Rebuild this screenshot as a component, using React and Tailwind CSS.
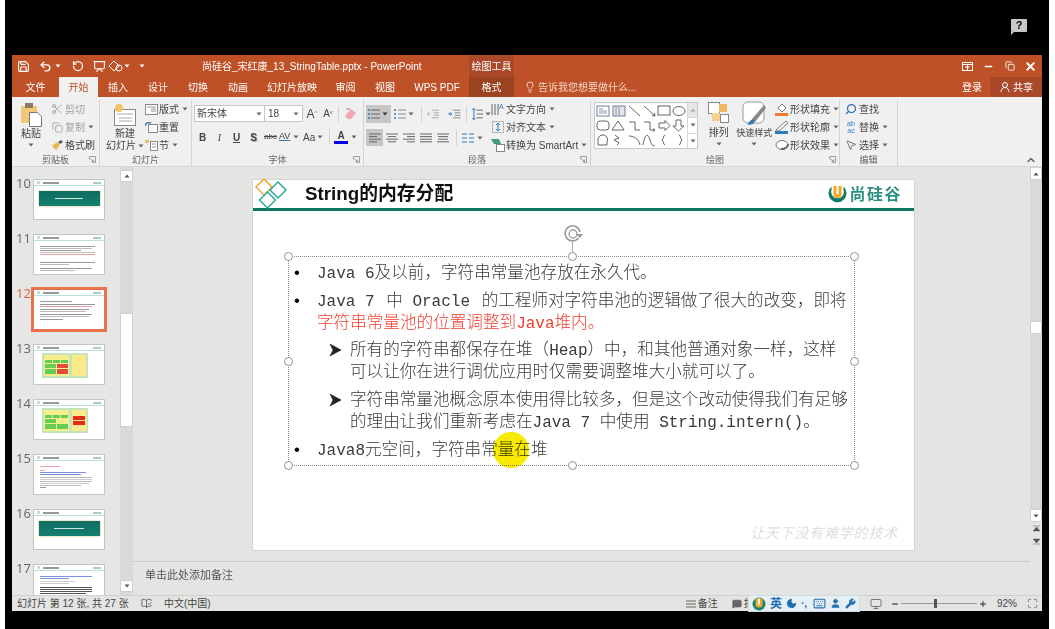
import { Save, Undo2, RotateCcw, Scissors, Copy, Lightbulb, UserRound, Search, X, Minus, Plus, MessageSquare, Moon, Keyboard, User, Wrench, MousePointer2, Presentation, ChevronUp, Maximize, Monitor, BookOpenCheck, Copy as Restore } from "lucide-react";

const fontUi = "[font-family:'Liberation_Sans','Noto_Sans_CJK_SC',sans-serif]";

function Caret({ color = "#666", className = "" }) {
    return (
        <svg width="6" height="4" viewBox="0 0 6 4" className={"inline-block shrink-0 " + className}>
            <path d="M0.5 0.5h5L3 3.5z" fill={color} />
        </svg>
    );
}

function Launcher() {
    return (
        <svg width="7" height="7" viewBox="0 0 7 7" className="absolute right-[3px] bottom-[3px]">
            <path d="M0.5 3V0.5H6.5V6.5H3.5M1 2.5L4.5 5.5M4.5 3.5V5.5H2.5" fill="none" stroke="#888" strokeWidth="0.8" />
        </svg>
    );
}

function Group({ width, label, launcher, children }) {
    return (
        <div style={{ width }} className="relative h-full shrink-0 flex flex-col border-r border-[#d4d4d4]">
            <div className="flex-1 min-h-0 flex">{children}</div>
            <div className="h-[12px] text-center text-[9px] leading-[12px] text-[#666]">{label}</div>
            {launcher && <Launcher />}
        </div>
    );
}

function SmallBtn({ icon, label, caret, gray, className = "" }) {
    return (
        <div className={"h-[18px] flex items-center gap-[1px] whitespace-nowrap text-[10px] " + (gray ? "text-[#a0a0a0] " : "text-[#444] ") + className}>
            <span className="w-[14px] h-[16px] flex items-center justify-center shrink-0">{icon}</span>
            <span>{label}</span>
            {caret && <Caret className="ml-[2px]" />}
        </div>
    );
}

function Lines({ rows, w = 17, active }) {
    // paragraph alignment icons
    return (
        <div className={"h-[17px] flex items-center justify-center " + (active ? "bg-[#c6c6c6] " : "")} style={{ width: w }}>
            <svg width="12" height="10" viewBox="0 0 12 10">
                {rows.map((r, i) => (
                    <line key={i} x1={r[0]} x2={r[1]} y1={1 + i * 2.6} y2={1 + i * 2.6} stroke="#666" strokeWidth="1" />
                ))}
            </svg>
        </div>
    );
}

function ShapesGallery() {
    const s = { fill: "none", stroke: "#666", strokeWidth: 1 };
    return (
        <div className="w-[104px] h-[47px] flex bg-white border border-[#c8c8c8]">
            <svg width="92" height="45" viewBox="0 0 92 45" className="shrink-0">
                <rect x="2" y="3" width="12" height="10" fill="#fff" stroke="#6a7f9c" />
                <path d="M4 6h4M4 8h8M4 10h8" stroke="#6a7f9c" strokeWidth="0.8" />
                <rect x="18" y="3" width="12" height="10" fill="#e6e6e6" stroke="#6a7f9c" />
                <path d="M21 4v8M24 4v8" stroke="#6a7f9c" strokeWidth="0.8" />
                <path d="M34 3l11 10" {...s} />
                <path d="M49 3l11 10M60 13l-3-.5M60 13l-.5-3" {...s} />
                <rect x="63" y="3" width="12" height="9" {...s} />
                <ellipse cx="84" cy="8" rx="6" ry="4.5" {...s} />
                <rect x="2" y="18" width="12" height="9" rx="3" {...s} />
                <path d="M23 18l6 9h-12z" {...s} />
                <path d="M34 19h6v8h5" {...s} />
                <path d="M49 19h6v8h5M60 27l-2-1.5M60 27l-2 1.5" {...s} />
                <path d="M64 20h6v-2.500l5 5-5 5V25h-6z" {...s} />
                <path d="M81 17h5v6h3l-5.500 5-5.500-5h3z" {...s} />
                <path d="M3 42v-7l3-3h3a5 5 0 0 1 3 7v3z" {...s} />
                <path d="M20 32l4 3-5 2 5 3-2 2" {...s} />
                <path d="M34 33c5 0 10 3 11 9" {...s} />
                <path d="M48 42c2-12 5-12 7-5s4 6 5 5" {...s} />
                <path d="M70 32c-2 0-1 4-3 5 2 1 1 5 3 5" {...s} />
                <path d="M84 32c2 0 1 4 3 5-2 1-1 5-3 5" {...s} />
            </svg>
            <div className="flex-1 flex flex-col border-l border-[#d8d8d8]">
                <div className="flex-1 flex items-center justify-center bg-[#e6e6e6]"><Caret color="#aaa" className="rotate-180" /></div>
                <div className="flex-1 flex items-center justify-center border-y border-[#d8d8d8]"><Caret /></div>
                <div className="flex-1 flex items-center justify-center"><Caret /></div>
            </div>
        </div>
    );
}

function Ribbon() {
    return (
        <div className="h-[70px] flex bg-[#f0f0f0] border-b border-[#d6d6d6] pt-[3px] text-[#444]">
            <Group width={88} label="剪贴板" launcher>
                <div className="w-[38px] flex flex-col items-center">
                    <svg width="21" height="24" viewBox="0 0 21 24" className="shrink-0 mt-[3px]">
                        <rect x="0" y="3" width="16" height="17" fill="#f2c878" />
                        <rect x="4" y="0" width="8" height="5" fill="#8a7a68" />
                        <path d="M8.500 9.500h8l4 4v10h-12z" fill="#fff" stroke="#777" />
                    </svg>
                    <div className="text-[10px] leading-[12px] mt-[1px]">粘贴</div>
                    <Caret className="mt-[3px]" />
                </div>
                <div className="flex flex-col">
                    <SmallBtn gray label="剪切" icon={<Scissors size={12} color="#aaa" />} />
                    <SmallBtn gray label="复制" caret icon={<Copy size={11} color="#aaa" />} />
                    <SmallBtn label="格式刷" icon={
                        <svg width="13" height="12" viewBox="0 0 13 12"><path d="M1 7l5-4 3 3-4 5z" fill="#e9b752" /><path d="M7 3l3-2 2 2-3 2z" fill="#555" /></svg>
                    } />
                </div>
            </Group>
            <Group width={92} label="幻灯片">
                <div className="w-[44px] flex flex-col items-center pl-[6px]">
                    <svg width="24" height="24" viewBox="0 0 24 24" className="shrink-0 mt-[3px]">
                        <rect x="1.500" y="6.500" width="21" height="16" fill="#fff" stroke="#888" />
                        <path d="M4 11h16M6 15h13M6 18h13" stroke="#aaa" />
                        <circle cx="6" cy="5" r="4" fill="#f4c260" />
                    </svg>
                    <div className="text-[10px] leading-[12px] mt-[1px]">新建</div>
                    <div className="flex items-center gap-[2px] text-[10px] leading-[12px] whitespace-nowrap">幻灯片<Caret /></div>
                </div>
                <div className="flex flex-col">
                    <SmallBtn label="版式" caret icon={<svg width="13" height="11" viewBox="0 0 13 11"><rect x="0.500" y="0.500" width="12" height="10" fill="#fff" stroke="#888" /><path d="M2 3h9M6 5h5M6 7h5" stroke="#999" /></svg>} />
                    <SmallBtn label="重置" icon={<svg width="13" height="11" viewBox="0 0 13 11"><rect x="3.500" y="2.500" width="9" height="8" fill="#fff" stroke="#888" /><path d="M0 4a4 4 0 0 1 6-3" fill="none" stroke="#2f7ab9" strokeWidth="1.500" /></svg>} />
                    <SmallBtn label="节" caret icon={<svg width="13" height="12" viewBox="0 0 13 12"><rect x="0" y="1" width="4" height="3" fill="#f0b860" /><rect x="5.500" y="2.500" width="7" height="9" fill="#fff" stroke="#888" /><path d="M7 5h4M7 8h4" stroke="#999" /></svg>} />
                </div>
            </Group>
            <Group width={172} label="字体" launcher>
                <div className="flex flex-col pl-[2px]">
                    <div className="flex items-center h-[17px] mt-[5px]">
                        <div className="w-[71px] h-[17px] flex items-center justify-between bg-white border border-[#c6c6c6] px-[2px] text-[10px]">新宋体<Caret /></div>
                        <div className="w-[38px] h-[17px] flex items-center justify-between bg-white border border-l-0 border-[#c6c6c6] px-[3px] text-[10px]">18<Caret /></div>
                        <div className="ml-[1px] w-[16px] text-[12px] text-center">A<sup className="text-[6px] text-[#2f7ab9]">^</sup></div>
                        <div className="w-[16px] text-[10px] text-center">A<sup className="text-[6px] text-[#2f7ab9]">v</sup></div>
                        <div className="w-px h-[16px] bg-[#d4d4d4] ml-[2px]" />
                        <svg width="14" height="14" viewBox="0 0 14 14" className="ml-[5px]"><path d="M1 9l6-7 5 4-5 6H4z" fill="#f1a7b3" /><path d="M2 2h4" stroke="#888" /></svg>
                    </div>
                    <div className="flex items-center h-[18px] mt-[6px] text-[10px] text-[#444]">
                        <span className="w-[17px] text-center font-bold">B</span>
                        <span className="w-[17px] text-center italic [font-family:'Liberation_Serif',serif]">I</span>
                        <span className="w-[17px] text-center underline font-bold">U</span>
                        <span className="w-[17px] text-center font-bold [text-shadow:1px_1px_0_#aaa]">S</span>
                        <span className="w-[17px] text-center text-[8px] line-through">abc</span>
                        <span className="w-[24px] flex items-center text-[9px]"><span className="underline decoration-[#2f7ab9]">AV</span><Caret className="ml-[3px]" /></span>
                        <span className="w-[24px] flex items-center">Aa<Caret className="ml-[2px]" /></span>
                        <span className="w-px h-[16px] bg-[#d4d4d4] ml-[2px]" />
                        <span className="ml-[4px] w-[14px] text-center font-bold leading-[11px] border-b-[3px] border-[#0000e6]">A</span>
                        <Caret className="ml-[3px]" />
                    </div>
                </div>
            </Group>
            <Group width={227} label="段落" launcher>
                <div className="flex flex-col w-[127px] pl-[2px] shrink-0">
                    <div className="flex items-center h-[18px] mt-[5px]">
                        <div className="w-[26px] h-[18px] flex items-center justify-center gap-[2px] bg-[#c6c6c6]">
                            <svg width="12" height="10" viewBox="0 0 12 10"><path d="M3 1h9M3 5h9M3 9h9" stroke="#666" /><path d="M0 1h2M0 5h2M0 9h2" stroke="#2f7ab9" strokeWidth="1.500" /></svg>
                            <Caret color="#333" />
                        </div>
                        <div className="w-[24px] flex items-center justify-center gap-[2px] ml-[2px]">
                            <svg width="12" height="10" viewBox="0 0 12 10"><path d="M4 1h8M4 5h8M4 9h8" stroke="#888" /><path d="M0 1h2M0 5h2M0 9h2" stroke="#2f7ab9" strokeWidth="1.500" /></svg>
                            <Caret />
                        </div>
                        <div className="w-px h-[16px] bg-[#d4d4d4] mx-[5px]" />
                        <svg width="13" height="10" viewBox="0 0 13 10" className="mr-[9px]"><path d="M5 1h8M7 3.700h6M7 6.300h6M5 9h8" stroke="#aaa" /><path d="M4 5H0M2 3L0 5l2 2" fill="none" stroke="#bbb" /></svg>
                        <svg width="13" height="10" viewBox="0 0 13 10"><path d="M5 1h8M7 3.700h6M7 6.300h6M5 9h8" stroke="#888" /><path d="M0 5h4M2 3l2 2-2 2" fill="none" stroke="#2f7ab9" /></svg>
                        <div className="w-px h-[16px] bg-[#d4d4d4] mx-[5px]" />
                        <svg width="12" height="14" viewBox="0 0 12 14"><path d="M5 3h7M5 7h7M5 11h7" stroke="#666" /><path d="M2 1v12M0 3l2-2 2 2M0 11l2 2 2-2" fill="none" stroke="#2f7ab9" /></svg>
                        <Caret className="ml-[2px]" />
                    </div>
                    <div className="flex items-center h-[17px] mt-[6px]">
                        <Lines active rows={[[0, 12], [0, 8], [0, 12], [0, 8]]} />
                        <Lines rows={[[0, 12], [2, 10], [0, 12], [2, 10]]} />
                        <Lines rows={[[0, 12], [4, 12], [0, 12], [4, 12]]} />
                        <Lines rows={[[0, 12], [0, 12], [0, 12], [0, 12]]} />
                        <Lines rows={[[0, 12], [1, 11], [1, 11], [0, 12]]} />
                        <div className="w-px h-[16px] bg-[#d4d4d4] mx-[5px]" />
                        <svg width="12" height="10" viewBox="0 0 12 10"><path d="M0 1h5M0 5h5M0 9h5M7 1h5M7 5h5M7 9h5" stroke="#2f7ab9" /></svg>
                        <Caret className="ml-[3px]" />
                    </div>
                </div>
                <div className="flex flex-col">
                    <SmallBtn label="文字方向" caret icon={<svg width="14" height="14" viewBox="0 0 14 14"><path d="M1 2v11M4 2v11M7 2v11" stroke="#666" /><text x="8" y="7" fontSize="7" fill="#2f7ab9">A</text></svg>} />
                    <SmallBtn label="对齐文本" caret icon={<svg width="14" height="14" viewBox="0 0 14 14"><rect x="1.500" y="1.500" width="11" height="11" fill="none" stroke="#999" strokeDasharray="2 1" /><path d="M7 3v8M5 5l2-2 2 2M5 9l2 2 2-2" fill="none" stroke="#2f7ab9" /></svg>} />
                    <SmallBtn label="转换为 SmartArt" caret icon={<svg width="14" height="14" viewBox="0 0 14 14"><path d="M0 1h8l2 5H3z" fill="#3c9a86" /><rect x="5.500" y="6.500" width="8" height="7" fill="#fff" stroke="#888" /></svg>} />
                </div>
            </Group>
            <Group width={249} label="绘图" launcher>
                <div className="pl-[3px] pt-[2px] shrink-0"><ShapesGallery /></div>
                <div className="w-[36px] ml-[4px] flex flex-col items-center">
                    <svg width="22" height="26" viewBox="0 0 22 26" className="mt-[1px] shrink-0">
                        <rect x="0.500" y="1.500" width="11" height="11" fill="#fff" stroke="#888" />
                        <rect x="11" y="3" width="8" height="8" fill="#f0b860" />
                        <rect x="4" y="12" width="8" height="8" fill="#f4d08a" />
                        <rect x="12.500" y="13.500" width="8" height="8" fill="#fff" stroke="#888" />
                    </svg>
                    <div className="text-[10px] leading-[12px]">排列</div>
                    <Caret className="mt-[3px]" />
                </div>
                <div className="w-[40px] flex flex-col items-center">
                    <svg width="24" height="26" viewBox="0 0 24 26" className="mt-[1px] shrink-0">
                        <rect x="1" y="1" width="21" height="21" rx="5" fill="#fff" stroke="#999" />
                        <path d="M22 4L10 18l-2 4 5-1L24 7z" fill="#888" />
                        <path d="M6 24c0-4 4-6 7-5l-2 4z" fill="#2f7ab9" />
                    </svg>
                    <div className="text-[9px] leading-[12px] whitespace-nowrap">快速样式</div>
                    <Caret className="mt-[3px]" />
                </div>
                <div className="flex flex-col ml-[2px]">
                    <SmallBtn label="形状填充" caret icon={<svg width="14" height="14" viewBox="0 0 14 14"><path d="M3 6l4-4 4 4-4 4z" fill="#fff" stroke="#777" /><rect x="0" y="11" width="13" height="3" fill="#ed7d31" /></svg>} />
                    <SmallBtn label="形状轮廓" caret icon={<svg width="14" height="14" viewBox="0 0 14 14"><path d="M1 10L11 1l2 2-9 8H1z" fill="#fff" stroke="#777" /><rect x="0" y="11" width="13" height="3" fill="#2f7ab9" /></svg>} />
                    <SmallBtn label="形状效果" caret icon={<svg width="14" height="12" viewBox="0 0 14 12"><ellipse cx="7" cy="6" rx="6" ry="4.500" fill="#fff" stroke="#777" /><path d="M6 10c4 0 7-2 7-5" stroke="#666" strokeWidth="2" fill="none" /></svg>} />
                </div>
            </Group>
            <Group width={58} label="编辑">
                <div className="flex flex-col pl-[4px]">
                    <SmallBtn label="查找" icon={<Search size={12} color="#2f6fae" strokeWidth={2.5} className="-scale-x-100" />} />
                    <SmallBtn label="替换" caret icon={<span className="text-[7px] leading-[7px] text-[#2f7ab9] text-center">ab<br />ac</span>} />
                    <SmallBtn label="选择" caret icon={<MousePointer2 size={12} color="#777" />} />
                </div>
            </Group>
            <div className="flex-1 flex items-end justify-end pr-[5px]"><ChevronUp size={12} color="#666" strokeWidth={3} /></div>
        </div>
    );
}

function TitleBar() {
    return (
        <div className="h-[22px] flex items-center bg-[#bf5128] text-white relative">
            <div className="w-[190px] flex items-center pl-[5px] shrink-0 gap-[7px]">
                <Save size={13} strokeWidth={2} />
                <Undo2 size={13} strokeWidth={2.5} className="ml-[2px]" />
                <Caret color="#fff" className="-ml-[4px]" />
                <RotateCcw size={12} strokeWidth={2.5} className="ml-[4px]" />
                <Presentation size={13} className="ml-[2px]" />
                <svg width="15" height="13" viewBox="0 0 15 13" className="-ml-[5px]"><path d="M1 6l5-5 5 5-5 5z" fill="none" stroke="#fff" /><circle cx="11" cy="8" r="3" fill="none" stroke="#fff" /></svg>
                <Caret color="#fff" className="-ml-[6px]" />
                <Caret color="#fff" className="ml-[2px]" />
            </div>
            <div className="w-[267px] text-[10px] whitespace-nowrap">尚硅谷_宋红康_13_StringTable.pptx - PowerPoint</div>
            <div className="w-[45px] h-full flex items-center justify-center bg-[#a9492a] text-[10px]">绘图工具</div>
            <div className="flex-1 flex items-center justify-end pr-[1px]">
                <div className="w-[21px] flex justify-center">
                    <svg width="11" height="9" viewBox="0 0 11 9"><rect x="0.500" y="0.500" width="10" height="8" fill="none" stroke="#fff" /><path d="M0 2.500h11M5.500 3v5M3 5h5" stroke="#fff" /></svg>
                </div>
                <div className="w-[21px] flex justify-center"><Minus size={11} strokeWidth={3} /></div>
                <div className="w-[21px] flex justify-center"><Restore size={10} strokeWidth={2} /></div>
                <div className="w-[21px] flex justify-center"><X size={13} strokeWidth={3.5} /></div>
            </div>
        </div>
    );
}

function Tab({ width, children, active, context }) {
    let cls = "text-white";
    if (active) cls = "bg-[#f0f0f0] text-[#bf5128]";
    if (context) cls = "bg-[#9b4220] text-white";
    return (
        <div style={{ width }} className={"h-full shrink-0 flex items-center justify-center text-[10px] whitespace-nowrap " + cls}>{children}</div>
    );
}

function TabBar() {
    return (
        <div className="h-[20px] flex items-center bg-[#bf5128]">
            <Tab width={47}>文件</Tab>
            <Tab width={39} active>开始</Tab>
            <Tab width={40}>插入</Tab>
            <Tab width={40}>设计</Tab>
            <Tab width={40}>切换</Tab>
            <Tab width={40}>动画</Tab>
            <Tab width={68}>幻灯片放映</Tab>
            <Tab width={39}>审阅</Tab>
            <Tab width={40}>视图</Tab>
            <Tab width={64}>WPS PDF</Tab>
            <Tab width={45} context>格式</Tab>
            <div className="flex items-center ml-[10px] gap-[2px] text-[10px] text-[#f3d3c4] whitespace-nowrap">
                <Lightbulb size={12} />告诉我您想要做什么...
            </div>
            <div className="ml-auto flex items-center h-full text-[10px] text-white">
                <span className="mr-[8px]">登录</span>
                <div className="w-[52px] h-full flex items-center justify-center gap-[2px] bg-[#a9492a]">
                    <UserRound size={12} />共享
                </div>
            </div>
        </div>
    );
}

function MiniHeader() {
    return (
        <div className="h-[6px] flex items-center justify-between px-[3px] border-b border-[#bfe0d6]">
            <div className="flex items-center gap-[3px]">
                <div className="w-[3px] h-[3px] bg-[#bfe0da]" />
                <div className="w-[16px] h-[2px] bg-[#999]" />
            </div>
            <div className="w-[8px] h-[2px] bg-[#a8cfc0]" />
        </div>
    );
}

function ThumbTitle({ wide }) {
    return (
        <div className="flex-1 flex items-start justify-center pt-[5px]">
            <div className="w-[61px] h-[15px] flex items-center justify-center bg-gradient-to-b from-[#0f6d60] to-[#13806f] shadow-[0_0_2px_#c9b26a]">
                <div className={"h-px bg-[#cfe6e0] " + (wide ? "w-[30px]" : "w-[28px]")} />
            </div>
        </div>
    );
}

function ThumbText({ rows }) {
    return (
        <div className="flex-1 flex flex-col gap-[1px] pl-[6px] pr-[6px] pt-[5px] overflow-hidden">
            {rows.map((r, i) => (
                <div key={i} style={{ width: r[0] + "%", backgroundColor: r[1], marginTop: r[2] || 0 }} className="h-px shrink-0" />
            ))}
        </div>
    );
}

function ThumbChart({ alt }) {
    return (
        <div className="flex-1 pl-[8px] pt-[2px]">
            <div className="w-[46px] h-[25px] flex gap-[3px] p-[2px] bg-[#c4e5bb]">
                <div className="w-[25px] flex flex-col gap-[1px] bg-[#f6ee8a] p-[1px]">
                    <div className="h-[3px]" />
                    <div className="flex gap-[1px]">
                        <div className="flex-1 h-[3px] bg-[#66cc55]" />
                        <div className="flex-1 h-[3px] bg-[#66cc55]" />
                        <div className="flex-1 h-[3px] bg-[#66cc55]" />
                    </div>
                    <div className="flex gap-[1px]">
                        <div className="flex-1 h-[4px] bg-[#66cc55]" />
                        <div className={"flex-1 h-[4px] " + (alt ? "bg-[#f6ee8a]" : "bg-[#e64a3a]")} />
                    </div>
                    <div className="flex gap-[1px]">
                        <div className="flex-1 h-[5px] bg-[#66cc55]" />
                        <div className={"flex-1 h-[5px] " + (alt ? "bg-[#66cc55]" : "bg-[#e64a3a]")} />
                    </div>
                </div>
                <div className="flex-1 flex flex-col gap-[1px] justify-center bg-[#fbe98a] p-[1px]">
                    {alt && <div className="h-[4px] bg-[#e62a1a]" />}
                    {alt && <div className="h-[4px] bg-[#e62a1a]" />}
                </div>
            </div>
        </div>
    );
}

const gray = "#999";
const soft = "#bbb";
const slides = [
    { n: 10, body: <ThumbTitle /> },
    { n: 11, body: <ThumbText rows={[[95, gray], [90, soft], [70, gray], [95, soft], [95, "#f0a0a0"], [0, gray, 2], [95, gray, 2], [50, soft], [90, gray, 2], [60, soft]]} /> },
    { n: 12, active: true, body: <ThumbText rows={[[55, gray], [95, gray, 1], [90, "#f0a0a0"], [85, gray, 1], [80, soft], [90, gray, 1], [85, soft], [40, gray, 1]]} /> },
    { n: 13, body: <ThumbChart /> },
    { n: 14, body: <ThumbChart alt /> },
    { n: 15, body: <ThumbText rows={[[35, "#f0a0a0"], [8, "#f0a0a0", 2], [80, "#7a92e0"], [70, "#7a92e0"], [90, soft, 1], [90, "#ccc"], [90, soft], [85, "#ccc"], [70, soft], [10, gray]]} /> },
    { n: 16, body: <ThumbTitle wide /> },
    { n: 17, body: <ThumbText rows={[[90, "#7a92e0"], [50, "#7a92e0"], [60, "#ccc", 1], [50, "#ccc"], [90, "#555", 2], [90, "#555"], [90, "#555"], [80, "#555"]]} /> },
];

function ThumbPanel() {
    return (
        <div className="w-[108px] shrink-0 h-full overflow-hidden bg-[#e6e7e5] pt-[12px]">
            {slides.map(s => (
                <div key={s.n} className="h-[55px] flex items-start">
                    <div className={"w-[21px] pl-[4px] text-[13px] leading-[15px] -mt-[3px] [font-family:'Open_Sans',sans-serif] " + (s.active ? "text-[#d9643c]" : "text-[#666]")}>{s.n}</div>
                    <div className={"w-[72px] h-[41px] flex flex-col bg-white border " + (s.active ? "border-[#e8734a] outline-2 outline-[#e8734a]" : "border-[#c4c6c4]")}>
                        <MiniHeader />
                        {s.body}
                    </div>
                </div>
            ))}
        </div>
    );
}

function ThumbScroll() {
    return (
        <div className="w-[13px] shrink-0 h-full flex flex-col bg-[#d9dad8] py-[3px]">
            <div className="h-[12px] flex items-center justify-center bg-white border border-[#cfcfcf]"><Caret color="#555" className="rotate-180" /></div>
            <div className="h-[131px]" />
            <div className="h-[114px] bg-white border border-[#cfcfcf]" />
            <div className="flex-1" />
            <div className="h-[12px] flex items-center justify-center bg-white border border-[#cfcfcf]"><Caret color="#555" /></div>
        </div>
    );
}

function Handle({ className }) {
    return <div className={"absolute w-[9px] h-[9px] rounded-full bg-white border border-[#909090] " + className} />;
}

function Mono({ children }) {
    return <span className="[font-family:'Liberation_Mono',monospace] text-[16px]">{children}</span>;
}

function Line({ children, className = "" }) {
    return <div className={"h-[22px] " + className}>{children}</div>;
}

function Bullet({ children, className = "" }) {
    return (
        <div className={"flex pl-[5px] " + className}>
            <span className="w-[23px] h-[22px] shrink-0 text-black">•</span>
            <div>{children}</div>
        </div>
    );
}

function Sub({ children, className = "" }) {
    return (
        <div className={"flex pl-[40px] " + className}>
            <svg width="21" height="22" viewBox="0 0 21 22" className="shrink-0"><path d="M1 5l11 6-11 6 3-6zM4 11h8" fill="#222" stroke="#222" strokeWidth="0.6" /></svg>
            <div>{children}</div>
        </div>
    );
}

function Slide() {
    return (
        <div className="w-[663px] h-[372px] shrink-0 bg-white border border-[#d4d6d4] relative">
            <div className="h-[31px] flex items-center border-b-[3px] border-[#0e7564]">
                <svg width="36" height="32" viewBox="0 0 36 32" className="ml-[1px] shrink-0">
                    <path d="M10 1l8 8-8 8-8-8z" fill="none" stroke="#f2a93b" strokeWidth="1.500" />
                    <path d="M24 4l8 8-8 8-8-8z" fill="none" stroke="#2fa89b" strokeWidth="1.500" />
                    <path d="M13.500 14l8 8-8 8-8-8z" fill="none" stroke="#2fa89b" strokeWidth="1.500" />
                </svg>
                <div className="ml-[15px] text-[18.800px] font-bold text-[#111] whitespace-nowrap">String的内存分配</div>
                <div className="ml-auto mr-[12px] flex items-center gap-[2px]">
                    <svg width="19" height="19" viewBox="0 0 19 19">
                        <path d="M3.500 1.500A9 9 0 1 0 15.500 1.500L15.500 5A6.300 6.300 0 1 1 3.500 5z" fill="#11796a" />
                        <path d="M5.500 1h8v8a4 4 0 0 1-8 0z" fill="#f5a623" />
                        <path d="M8.500 1h2v8a1 1 0 0 1-2 0z" fill="#fff" />
                    </svg>
                    <span className="text-[16px] leading-[19px] font-bold text-[#2a8f80] tracking-[1.500px] whitespace-nowrap">尚硅谷</span>
                </div>
            </div>
            <div className="relative ml-[35px] mt-[45px] w-[567px] h-[210px] border border-dotted border-[#8a8a8a] pt-[5px] text-[16.600px] leading-[22px] text-[#3a3a3a] whitespace-nowrap font-light">
                <Bullet><Line><Mono>Java 6</Mono>及以前，字符串常量池存放在永久代。</Line></Bullet>
                <Bullet className="mt-[6px]">
                    <Line><Mono>Java 7 </Mono><span className="ml-[2px]">中</span><Mono> Oracle </Mono><span className="ml-[2px]">的工程师对字符串池的逻辑做了很大的改变，即将</span></Line>
                    <Line className="text-[#f04030]">字符串常量池的位置调整到<Mono>Java</Mono>堆内。</Line>
                </Bullet>
                <Sub className="mt-[5px]">
                    <Line>所有的字符串都保存在堆（<Mono>Heap</Mono>）中，和其他普通对象一样，这样</Line>
                    <Line>可以让你在进行调优应用时仅需要调整堆大小就可以了。</Line>
                </Sub>
                <Sub className="mt-[6px]">
                    <Line>字符串常量池概念原本使用得比较多，但是这个改动使得我们有足够</Line>
                    <Line>的理由让我们重新考虑在<Mono>Java 7 </Mono>中使用<Mono> String.intern()</Mono>。</Line>
                </Sub>
                <Bullet className="mt-[6px]"><Line><Mono>Java8</Mono>元空间，字符串常量在堆</Line></Bullet>
                <div className="absolute left-[204px] top-[175px] w-[36px] h-[36px] rounded-full bg-[#f8ea00] mix-blend-multiply" />
                <Handle className="-left-[5px] -top-[5px]" />
                <Handle className="left-[279px] -top-[5px]" />
                <Handle className="-right-[5px] -top-[5px]" />
                <Handle className="-left-[5px] top-[100px]" />
                <Handle className="-right-[5px] top-[100px]" />
                <Handle className="-left-[5px] -bottom-[5px]" />
                <Handle className="left-[279px] -bottom-[5px]" />
                <Handle className="-right-[5px] -bottom-[5px]" />
                <div className="absolute left-[283px] -top-[15px] w-px h-[11px] bg-[#aaa]" />
                <svg width="20" height="20" viewBox="0 0 20 20" className="absolute left-[274px] -top-[33px]">
                    <path d="M15.500 14A7.500 7.500 0 1 1 17 8" fill="none" stroke="#999" strokeWidth="1.600" />
                    <circle cx="10" cy="10" r="4" fill="none" stroke="#999" strokeWidth="1.300" />
                    <path d="M13 10h7l-3 4z" fill="#999" />
                </svg>
            </div>
            <div className="absolute right-[16px] bottom-[7px] text-[14px] leading-[20px] tracking-[0.800px] italic text-[#dcdcdc] whitespace-nowrap">让天下没有难学的技术</div>
        </div>
    );
}

function MainScroll() {
    return (
        <div className="w-[12px] shrink-0 h-full flex flex-col items-stretch bg-[#d9dad8]">
            <div className="h-[13px] flex items-center justify-center bg-white border border-[#cfcfcf]"><Caret color="#555" className="rotate-180" /></div>
            <div className="h-[141px]" />
            <div className="h-[13px] bg-white border border-[#cfcfcf]" />
            <div className="flex-1" />
            <div className="h-[13px] flex items-center justify-center bg-white border border-[#cfcfcf]"><Caret color="#555" /></div>
            <div className="h-[73px] pt-[3px] flex flex-col items-center gap-[6px] bg-[#e3e5e3]">
                <svg width="7" height="7" viewBox="0 0 7 7"><path d="M0 1h7M3.500 2L0 6h7z" fill="#555" stroke="#555" strokeWidth="0.500" /></svg>
                <svg width="7" height="7" viewBox="0 0 7 7"><path d="M0 6h7M3.500 5L0 1h7z" fill="#555" stroke="#555" strokeWidth="0.500" /></svg>
            </div>
        </div>
    );
}

function StatusBar() {
    return (
        <div className="h-[16px] flex items-center bg-[#e4e5e3] border-t border-[#d0d0d0] text-[10px] text-[#444] whitespace-nowrap relative">
            <span className="w-[129px] pl-[5px] shrink-0">幻灯片 第 12 张, 共 27 张</span>
            <BookOpenCheck size={11} color="#666" />
            <span className="ml-[12px]">中文(中国)</span>
            <div className="ml-[475px] flex items-center gap-[2px] w-[46px]">
                <svg width="10" height="8" viewBox="0 0 10 8"><path d="M0 1h10M0 4h10M0 7h10" stroke="#666" /></svg>备注
            </div>
            <div className="flex items-center gap-[2px]">
                <MessageSquare size={10} color="#666" fill="#666" />批
            </div>
            <div className="absolute left-[736px] -top-[1px] w-[112px] h-[17px] flex items-center gap-[4px] pl-[3px] bg-[#e8eff4] border border-[#d0dbe4] z-10">
                <svg width="14" height="14" viewBox="0 0 14 14" className="shrink-0">
                    <circle cx="7" cy="7" r="6.500" fill="#1d8270" />
                    <path d="M3.500 1.500h7V7a3.500 3.500 0 0 1-7 0z" fill="#f5a623" />
                    <path d="M6 1.500h2V7a1 1 0 0 1-2 0z" fill="#fff" />
                </svg>
                <span className="text-[12px] leading-[14px] font-bold text-[#1f6fb5]">英</span>
                <Moon size={11} color="#1f6fb5" fill="#1f6fb5" />
                <span className="w-[8px] text-[10px] font-bold leading-[10px] text-[#1f6fb5]">·,</span>
                <Keyboard size={13} color="#1f6fb5" />
                <User size={11} color="#1f6fb5" fill="#1f6fb5" />
                <Wrench size={11} color="#1f6fb5" fill="#1f6fb5" />
            </div>
            <div className="ml-auto flex items-center pr-[4px]">
                <Monitor size={12} color="#777" className="mr-[9px]" />
                <Minus size={8} color="#555" strokeWidth={4} />
                <div className="w-[76px] h-px bg-[#999] mx-[2px] relative">
                    <div className="absolute left-[33px] -top-[4px] w-[3px] h-[9px] bg-[#555]" />
                </div>
                <Plus size={8} color="#555" strokeWidth={4} />
                <span className="ml-[10px] mr-[10px]">92%</span>
                <Maximize size={11} color="#777" />
            </div>
        </div>
    );
}

function App() {
    return (
        <div className={"w-[1055px] h-[629px] overflow-hidden bg-white flex " + fontUi}>
            <div className="w-[5px] shrink-0" />
            <div className="w-[1044px] shrink-0 bg-black pl-[7px] flex flex-col">
                <div className="h-[55px] shrink-0 flex justify-end items-start pr-[22px] pt-[19px]">
                    <div className="relative w-[16px] h-[13px] bg-[#c8c8c8] rounded-[1px] flex items-center justify-center text-[11px] leading-[13px] font-bold text-black">
                        ?
                        <div className="absolute left-0 -bottom-[3px] w-0 h-0 border-t-[3px] border-r-[3px] border-t-[#c8c8c8] border-r-transparent" />
                    </div>
                </div>
                <div className="w-[1030px] h-[556px] shrink-0 flex flex-col bg-[#e3e5e3]">
                    <TitleBar />
                    <TabBar />
                    <Ribbon />
                    <div className="flex-1 min-h-0 flex">
                        <ThumbPanel />
                        <ThumbScroll />
                        <div className="flex-1 flex flex-col min-w-0">
                            <div className="h-[395px] shrink-0 pl-[119px] pt-[12px] border-b border-[#c8cac8]">
                                <Slide />
                            </div>
                            <div className="flex-1 pl-[12px] pt-[3px] text-[11px] leading-[20px] text-[#555]">单击此处添加备注</div>
                        </div>
                        <MainScroll />
                    </div>
                    <StatusBar />
                </div>
            </div>
            <div className="flex-1" />
        </div>
    );
}

export default App;
